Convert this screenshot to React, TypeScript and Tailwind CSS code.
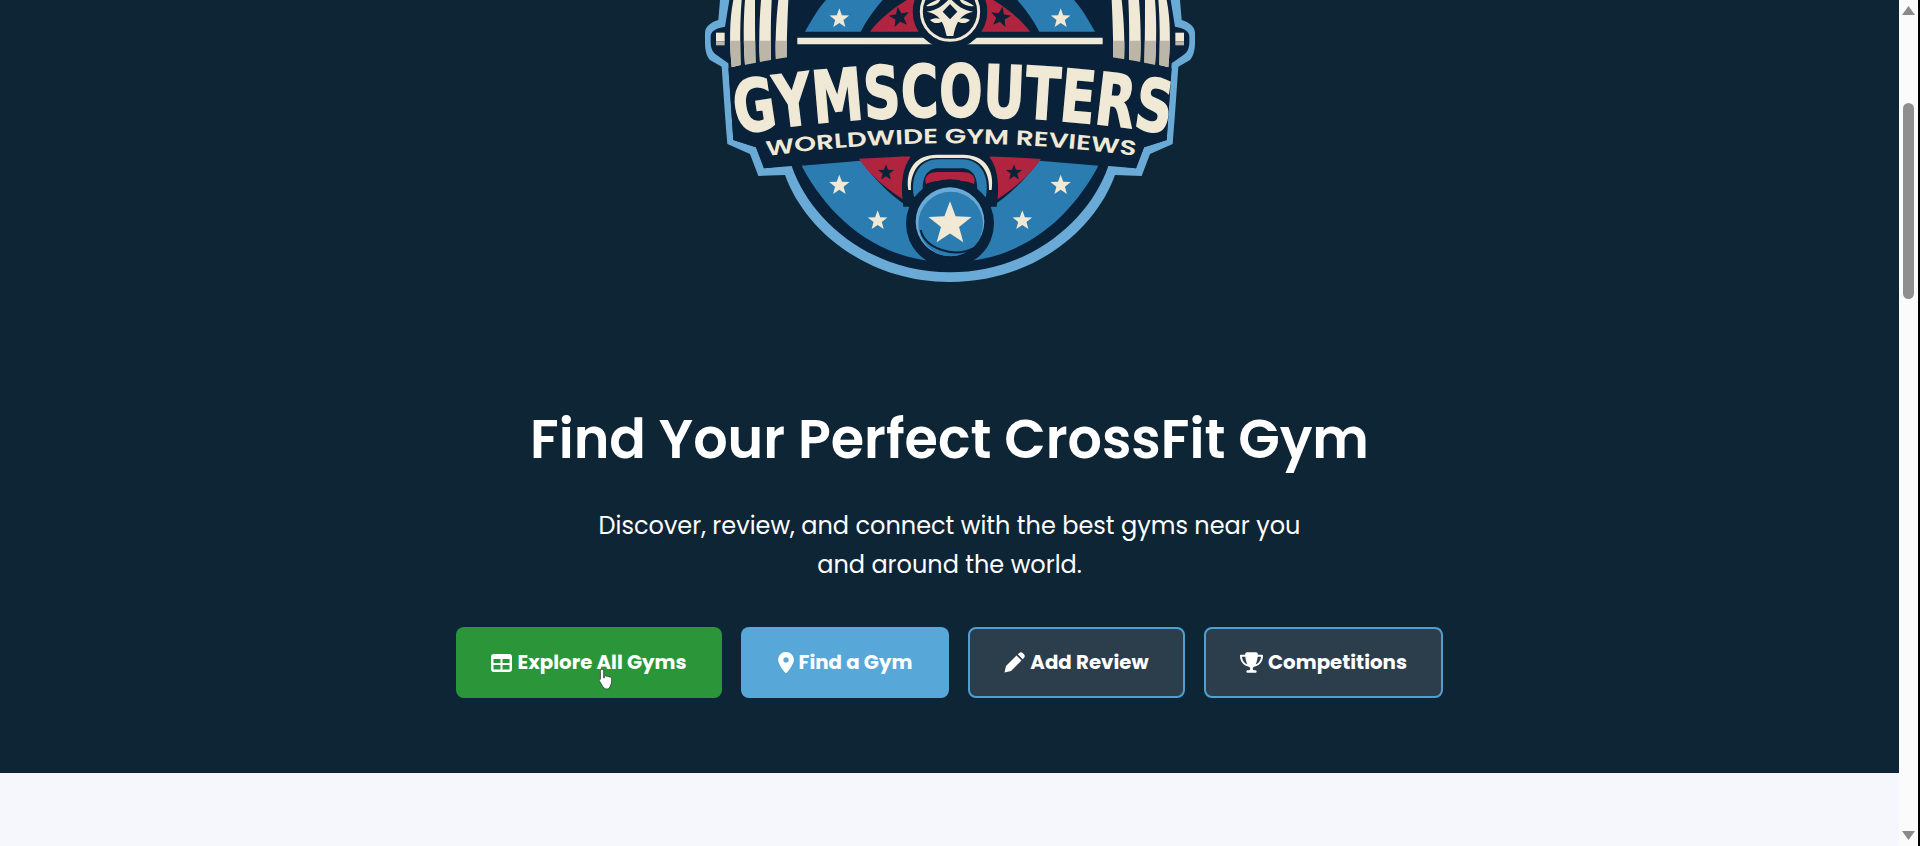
import React from "react";
import { FaLocationDot, FaTrophy } from "react-icons/fa6";

const cream = "#f0e9d6";
const navy = "#0a2239";
const blue = "#2b7cb1";
const light = "#6aaad6";
const red = "#b0243f";
const shade = "#bcb6a8";

function Star({ x, y, r, fill, rot = 0 }: { x: number; y: number; r: number; fill: string; rot?: number }) {
  const pts: string[] = [];
  for (let i = 0; i < 10; i++) {
    const a = (-90 + rot + i * 36) * (Math.PI / 180);
    const rr = i % 2 === 0 ? r : r * 0.42;
    pts.push(`${x + rr * Math.cos(a)},${y + rr * Math.sin(a)}`);
  }
  return <polygon points={pts.join(" ")} fill={fill} />;
}

const ribs = [
  "M130 0 H155 C150 60 150 130 152 195 L125 202 C118 130 118 60 130 0 Z",
  "M165 0 H195 C195 60 195 130 197 190 L165 195 C160 130 160 60 165 0 Z",
  "M213 0 H245 C242 60 242 130 243 185 L210 190 C206 130 208 60 213 0 Z",
  "M265 0 H295 C292 60 290 130 290 180 L258 185 C255 130 258 60 265 0 Z",
];

function Half() {
  return (
    <g>
      <path d="M780 846 C520 846 340 680 285 525 L205 528 L180 462 L112 432 C105 350 100 270 95 200 L60 180 C50 170 45 150 45 130 L45 100 C45 80 60 68 85 60 L90 0 L780 0 Z" fill={light} />
      <path d="M780 817 C540 817 360 660 305 498 L222 505 L198 442 L130 420 C125 340 120 270 115 190 L80 165 C65 155 62 140 62 125 L62 110 C62 95 75 85 105 80 L118 0 L780 0 Z" fill={navy} />
      <path d="M335 497 L512 482 C560 545 610 595 672 630 L715 782 C540 760 410 640 335 497 Z" fill={blue} />
      <path d="M505 474 L660 466 L662 612 C590 570 540 525 505 474 Z" fill={red} />
      <path d="M345 95 C365 60 385 25 408 0 L578 0 C552 30 530 60 512 95 Z" fill={blue} />
      <path d="M540 95 C570 55 610 25 650 0 L780 0 L780 95 Z" fill={red} />
      <Star x={448} y={56} r={31} fill={cream} />
      <Star x={628} y={52} r={32} fill={navy} rot={-10} />
      <Star x={448} y={556} r={32} fill={cream} />
      <Star x={563} y={662} r={31} fill={cream} />
      <Star x={588} y={518} r={25} fill={navy} />
      {ribs.map((d) => (
        <path key={d} d={d} fill={cream} />
      ))}
      <g clipPath="url(#ribShade)">
        {ribs.map((d) => (
          <path key={d} d={d} fill={shade} />
        ))}
      </g>
      <rect x="78" y="98" width="26" height="26" fill={cream} />
      <rect x="78" y="124" width="26" height="12" fill={shade} />
    </g>
  );
}

function Logo() {
  return (
    <svg viewBox="0 0 1560 900" className="block h-[300px] w-[520px] shrink-0" aria-label="GymScouters logo">
      <defs>
        <path id="wwArc" d="M230 468 Q780 392 1340 468" fill="none" />
        <path id="gsArc" d="M142 402 Q780 296 1445 402" fill="none" />
        <clipPath id="ribShade">
          <rect x="100" y="122" width="220" height="100" />
        </clipPath>
      </defs>
      <Half />
      <g transform="translate(1560 0) scale(-1 1)">
        <Half />
      </g>
      <path d="M115 205 Q780 60 1445 205 L1430 420 L1362 442 L1338 505 Q780 430 222 505 L198 442 L130 420 Z" fill={navy} />
      <path d="M322 113 H725 L738 133 H322 Z" fill={cream} />
      <path d="M1238 113 H835 L822 133 H1238 Z" fill={cream} />
      <circle cx="780" cy="35" r="112" fill={navy} />
      <circle cx="780" cy="35" r="86" fill="none" stroke={cream} strokeWidth="9" />
      <path d="M710 35 C745 30 760 15 780 -5 C800 15 815 30 850 35 C815 42 800 60 790 108 H770 C760 60 745 42 710 35 Z" fill={cream} />
      <path d="M780 12 L802 35 L780 58 L758 35 Z" fill={navy} />
      <path d="M720 60 C735 52 750 54 760 62 C748 72 730 72 720 60 Z M840 60 C825 52 810 54 800 62 C812 72 830 72 840 60 Z" fill={cream} />
      <path d="M708 18 C720 8 740 0 755 -5 L745 8 C735 16 720 20 708 18 Z M852 18 C840 8 820 0 805 -5 L815 8 C825 16 840 20 852 18 Z" fill={cream} />
      <text fill={cream} stroke={cream} strokeWidth="5" fontFamily="'DejaVu Sans Condensed','DejaVu Sans',sans-serif" fontWeight="700" fontSize="216" textLength="1300" lengthAdjust="spacingAndGlyphs">
        <textPath href="#gsArc">GYMSCOUTERS</textPath>
      </text>
      <text fill={cream} fontFamily="'Poppins',sans-serif" fontWeight="600" fontSize="62" textLength="1110" lengthAdjust="spacingAndGlyphs">
        <textPath href="#wwArc">WORLDWIDE GYM REVIEWS</textPath>
      </text>
      <path d="M640 620 C625 520 650 448 715 448 H845 C910 448 935 520 920 620 Z" fill={navy} />
      <path d="M655 570 C645 505 680 464 740 464 H820 C880 464 915 505 905 570 L897 570 C900 515 870 474 820 474 H740 C690 474 660 515 663 570 Z" fill={cream} />
      <path d="M672 590 C660 525 690 478 745 478 H815 C870 478 900 525 888 590 L860 590 C868 535 850 505 815 505 H745 C710 505 692 535 700 590 Z" fill={blue} />
      <path d="M708 552 C700 530 715 516 745 516 H815 C845 516 860 530 852 552 C830 538 730 538 708 552 Z" fill={red} />
      <circle cx="780" cy="670" r="132" fill={navy} />
      <circle cx="780" cy="665" r="103" fill={light} />
      <circle cx="782" cy="672" r="97" fill={blue} />
      <path d="M692 690 C705 745 790 775 850 745" fill="none" stroke={navy} strokeWidth="6" />
      <Star x={780} y={672} r={68} fill={cream} />
    </svg>
  );
}

const poppins = "font-['Poppins','Inter','Liberation_Sans',sans-serif]";

export default function App() {
  return (
    <div className="flex h-[846px] w-full overflow-hidden bg-black">
      <div className="flex w-[1899px] shrink-0 flex-col bg-[#f5f7fc]">
        <section className={`flex h-[773px] flex-col items-center bg-[#0e2536] text-white ${poppins}`}>
          <Logo />
          <h1 className="mt-[108px] text-[54px] leading-[62px] font-semibold">Find Your Perfect CrossFit Gym</h1>
          <p className="mt-[36px] w-[760px] text-center text-[24px] leading-[39px] font-normal">
            Discover, review, and connect with the best gyms near you
            <br />
            and around the world.
          </p>
          <div className="mt-[43px] flex gap-[19px] text-[19.8px] font-bold">
            <a className="relative flex h-[71px] w-[266px] items-center justify-center gap-[5px] rounded-[8px] bg-[#2a9639]">
              <svg width="21" height="18" viewBox="0 0 21 18" className="shrink-0">
                <path fillRule="evenodd" d="M3 0 H18 A3 3 0 0 1 21 3 V15 A3 3 0 0 1 18 18 H3 A3 3 0 0 1 0 15 V3 A3 3 0 0 1 3 0 Z M2.500 5 V9 H9.500 V5 Z M11.500 5 V9 H18.500 V5 Z M2.500 11 V15.500 H9.500 V11 Z M11.500 11 V15.500 H18.500 V11 Z" fill="#fff" />
              </svg>
              Explore All Gyms
              <span className="absolute top-[41px] left-[142px]">
                <svg width="16" height="22" viewBox="0 0 16 22" className="block">
                  <path d="M4 1.5c1 0 1.7.7 1.7 1.7V10l.6-.1V8.300c.8-.9 2-.7 2.400.2.8-.6 2-.3 2.300.6.9-.4 2.400 0 2.600 1.300.3 2.300 0 5-1.200 7.600-.7 1.600-1.400 2.500-3 3H8c-1.500-.3-2.500-1.300-3.500-3L1.300 12.700c-.6-1.300.6-2.500 1.700-1.500l-.6-.5V3.200C2.400 2.200 3 1.500 4 1.500z" fill="#fff" stroke="#2d3a33" strokeWidth="0.8" />
                </svg>
              </span>
            </a>
            <a className="flex h-[71px] w-[208px] items-center justify-center gap-[5px] rounded-[8px] bg-[#57a8d8]">
              <FaLocationDot className="h-[21px] w-[16px] shrink-0" />
              Find a Gym
            </a>
            <a className="flex h-[71px] w-[217px] items-center justify-center gap-[5px] rounded-[8px] border-2 border-[#4f9fcf] bg-[#2c3e4c]">
              <svg width="21" height="21" viewBox="0 0 21 21" className="shrink-0">
                <path d="M0.500 20.500 L2 14 L12.500 3.500 L17.500 8.500 L7 19 Z" fill="#fff" />
                <path d="M13.800 2.300 L15.300 0.900 C16.200 0 17.500 0 18.400 0.800 L20.100 2.500 C21 3.400 21 4.700 20.100 5.700 L18.700 7.200 Z" fill="#fff" />
              </svg>
              Add Review
            </a>
            <a className="flex h-[71px] w-[239px] items-center justify-center gap-[5px] rounded-[8px] border-2 border-[#4f9fcf] bg-[#2c3e4c]">
              <FaTrophy className="h-[21px] w-[23px] shrink-0" />
              Competitions
            </a>
          </div>
        </section>
      </div>
      <div className="flex w-[19px] shrink-0 flex-col items-center bg-[#fbfbfb] pt-[6px] pb-[6px]">
        <svg width="13" height="9" viewBox="0 0 13 9" className="shrink-0"><path d="M6.500 0 L13 9 H0 Z" fill="#8a8a8a" /></svg>
        <div className="mt-[88px] h-[196px] w-[11px] rounded-full bg-[#8f8f8f]" />
        <div className="flex-1" />
        <svg width="13" height="9" viewBox="0 0 13 9" className="shrink-0"><path d="M0 0 H13 L6.500 9 Z" fill="#8a8a8a" /></svg>
      </div>
      <div className="w-[2px] shrink-0 bg-black" />
    </div>
  );
}
